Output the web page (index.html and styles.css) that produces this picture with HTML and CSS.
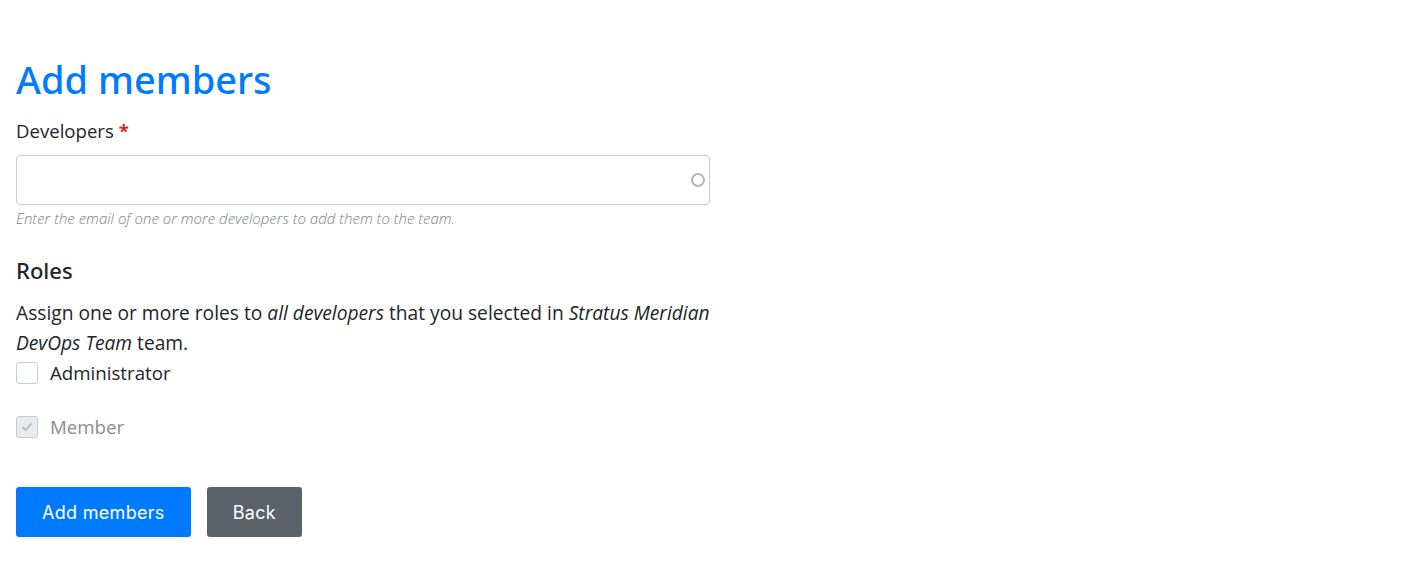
FILE: index.html
```html
<!DOCTYPE html>
<html>
<head>
<meta charset="utf-8">
<link rel="stylesheet" href="styles.css">
</head>
<body>
<div class="page">
  <h1 class="title">Add members</h1>
  <div class="field">
    <label class="label">Developers <span class="req">*</span></label>
    <div class="input">
      <span class="spinner"></span>
    </div>
    <div class="help">Enter the email of one or more developers to add them to the team.</div>
  </div>
  <h2 class="subtitle">Roles</h2>
  <p class="desc">Assign one or more roles to <em>all developers</em> that you selected in <em>Stratus Meridian DevOps Team</em> team.</p>
  <div class="checks">
    <label class="check">
      <span class="box"></span>
      <span class="check-text">Administrator</span>
    </label>
    <label class="check disabled">
      <span class="box checked">
        <svg viewBox="0 0 16 16" width="14" height="14"><path d="M3.2 8.4 L6.4 11.4 L12.8 4.6" fill="none" stroke="#b9bec4" stroke-width="2.4" stroke-linecap="round" stroke-linejoin="round"/></svg>
      </span>
      <span class="check-text">Member</span>
    </label>
  </div>
  <div class="actions">
    <button class="btn primary">Add members</button>
    <button class="btn secondary">Back</button>
  </div>
</div>
</body>
</html>
```
FILE: styles.css
```css
html, body {
  margin: 0;
  padding: 0;
  background: #fff;
}
body {
  font-family: "Open Sans", "Noto Sans", sans-serif;
  color: #212529;
}
.page {
  width: 694px;
  padding: 55px 16px 0 16px;
}
.title {
  margin: 0;
  font-family: "Noto Sans", "Open Sans", sans-serif;
  font-weight: 500;
  font-size: 38px;
  line-height: 48px;
  color: #007bff;
}
.field {
  margin-top: 15px;
}
.label {
  display: block;
  font-size: 18.6px;
  line-height: 26px;
  margin-bottom: 11px;
}
.req {
  color: #dc1f26;
  font-weight: 700;
}
.input {
  height: 48px;
  border: 1px solid #c6ccd3;
  border-radius: 4px;
  display: flex;
  align-items: center;
  justify-content: flex-end;
  padding-right: 4px;
}
.spinner {
  width: 10px;
  height: 10px;
  border: 2.5px solid #b5b5b5;
  border-radius: 50%;
}
.help {
  margin-top: 3px;
  font-size: 15px;
  line-height: 20px;
  font-style: italic;
  font-weight: 300;
  color: #7a7f85;
}
.subtitle {
  margin: 27px 0 0 0;
  font-family: "Noto Sans", "Open Sans", sans-serif;
  font-weight: 500;
  font-size: 22px;
  line-height: 30px;
}
.desc {
  margin: 13px 0 0 0;
  font-size: 19.2px;
  line-height: 30px;
}
.checks {
  margin-top: 2px;
  display: flex;
  flex-direction: column;
  gap: 28px;
}
.check {
  display: flex;
  align-items: center;
  gap: 12px;
  font-size: 18.7px;
  line-height: 26px;
}
.box {
  width: 20px;
  height: 20px;
  border: 1px solid #c6ccd3;
  border-radius: 3px;
  box-sizing: content-box;
  display: flex;
  align-items: center;
  justify-content: center;
}
.box.checked {
  background: #e9ecef;
}
.disabled .check-text {
  color: #868e96;
}
.actions {
  margin-top: 47px;
  display: flex;
  gap: 16px;
}
.btn {
  height: 50px;
  border: none;
  border-radius: 3px;
  color: #fff;
  font-family: "Inter", "Lato", sans-serif;
  font-size: 18px;
  letter-spacing: 0.3px;
  padding: 0 26px;
}
.primary {
  background: #007bff;
}
.secondary {
  background: #5a6168;
}
```
